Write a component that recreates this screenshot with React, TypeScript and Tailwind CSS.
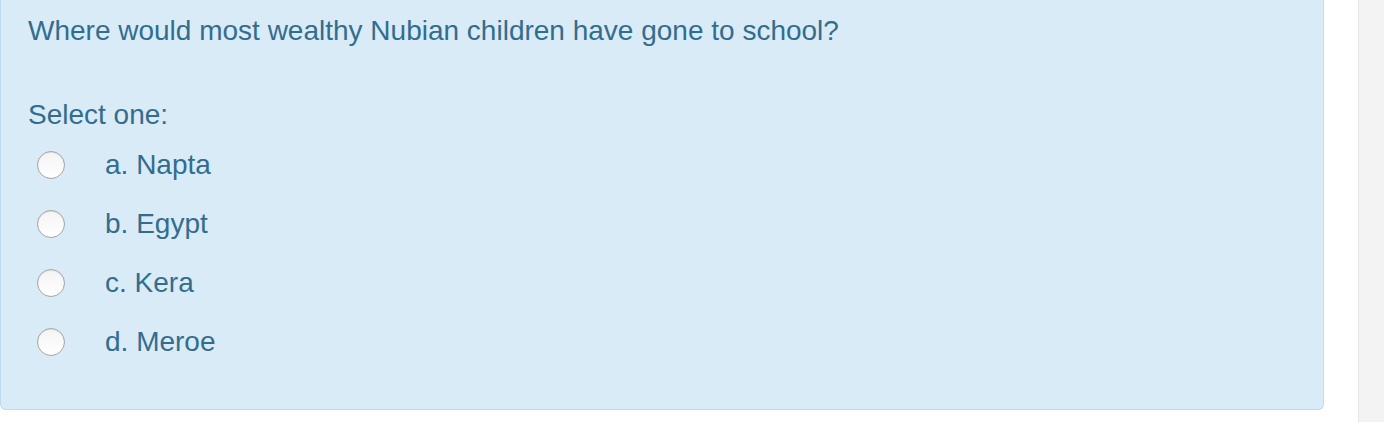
export default function App() {
  const options = ['a. Napta', 'b. Egypt', 'c. Kera', 'd. Meroe']

  return (
    <div className="flex h-[422px] w-[1384px] bg-white" style={{ fontFamily: '"Liberation Sans", Arial, sans-serif' }}>
      <div className="w-[1358px]">
        {/* question panel */}
        <div className="h-[410px] w-[1324px] rounded-b-[6px] border-x border-b border-[#bcdcee] bg-[#d9ebf7] pl-[27px] pt-[14px] text-[#336d8e]">
          <div className="text-[28px] leading-[34px]">Where would most wealthy Nubian children have gone to school?</div>
          <div className="mt-[50px] text-[28px] leading-[34px]">Select one:</div>
          <div className="mt-[16px] flex flex-col gap-[25px]">
            {options.map((o) => (
              <label key={o} className="flex h-[34px] items-center">
                <span className="ml-[9px] h-[28px] w-[28px] rounded-full border border-[#a5a5a5] bg-gradient-to-b from-[#f4f4f4] to-white shadow-[inset_0_1px_1px_rgba(0,0,0,0.08)]" />
                <span className="ml-[40px] text-[28px] leading-[34px]">{o}</span>
              </label>
            ))}
          </div>
        </div>
      </div>
      <div className="flex-1 border-l border-[#e6e6e6] bg-[#f3f3f3]" />
    </div>
  )
}
